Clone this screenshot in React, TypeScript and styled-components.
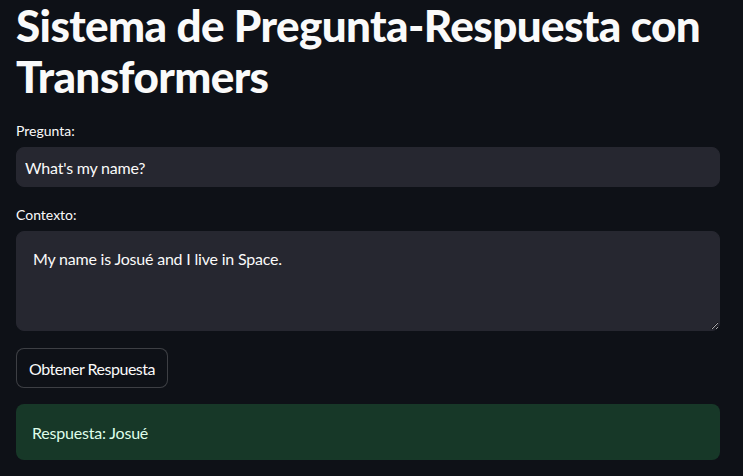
import React from "react";
import styled, { createGlobalStyle } from "styled-components";

const Global = createGlobalStyle`
  html, body { margin: 0; padding: 0; background: #0e1117; }
  body { font-family: Lato, "Liberation Sans", sans-serif; color: #fafafa; }
  * { box-sizing: border-box; }
`;

const Page = styled.main`
  width: 743px;
  height: 476px;
  overflow: hidden;
  padding: 0 23px 0 16px;
  display: flex;
  flex-direction: column;
`;

const Title = styled.h1`
  margin: 0;
  font-size: 44px;
  line-height: 51px;
  font-weight: 900;
  letter-spacing: -0.6px;
  color: #fafafa;
`;

const Field = styled.div`
  display: flex;
  flex-direction: column;
  margin-top: ${(p: { $top: number }) => p.$top}px;
`;

const Label = styled.label`
  font-size: 14px;
  line-height: 20px;
  height: 20px;
  margin-bottom: 6px;
  color: #fafafa;
`;

const Input = styled.input`
  height: 40px;
  width: 100%;
  border: 1px solid #262730;
  border-radius: 8px;
  background: #262730;
  color: #fafafa;
  font: 16px Lato, "Liberation Sans", sans-serif;
  letter-spacing: -0.2px;
  padding: 0 8px;
  outline: none;
`;

const TextArea = styled.textarea`
  height: 100px;
  width: 100%;
  border: 1px solid #262730;
  border-radius: 8px;
  background: #262730;
  color: #fafafa;
  font: 16px/22px Lato, "Liberation Sans", sans-serif;
  letter-spacing: -0.2px;
  padding: 16px;
  outline: none;
  resize: vertical;
  color-scheme: dark;
`;

const Button = styled.button`
  align-self: flex-start;
  margin-top: 17px;
  height: 40px;
  padding: 0 12px;
  background: #0e1117;
  border: 1px solid rgba(250, 250, 250, 0.2);
  border-radius: 8px;
  color: #fafafa;
  font: 16px Lato, "Liberation Sans", sans-serif;
  letter-spacing: -0.5px;
`;

const Success = styled.div`
  margin-top: 16px;
  height: 56px;
  border-radius: 8px;
  background: #173828;
  color: #dffde9;
  font-size: 16px;
  letter-spacing: -0.2px;
  display: flex;
  align-items: center;
  padding: 0 16px;
`;

export default function App() {
  return (
    <Page>
      <Global />
      <Title>Sistema de Pregunta-Respuesta con Transformers</Title>
      <Field $top={19}>
        <Label>Pregunta:</Label>
        <Input defaultValue="What's my name?" />
      </Field>
      <Field $top={18}>
        <Label>Contexto:</Label>
        <TextArea defaultValue="My name is Josué and I live in Space." />
      </Field>
      <Button>Obtener Respuesta</Button>
      <Success>Respuesta: Josué</Success>
    </Page>
  );
}
